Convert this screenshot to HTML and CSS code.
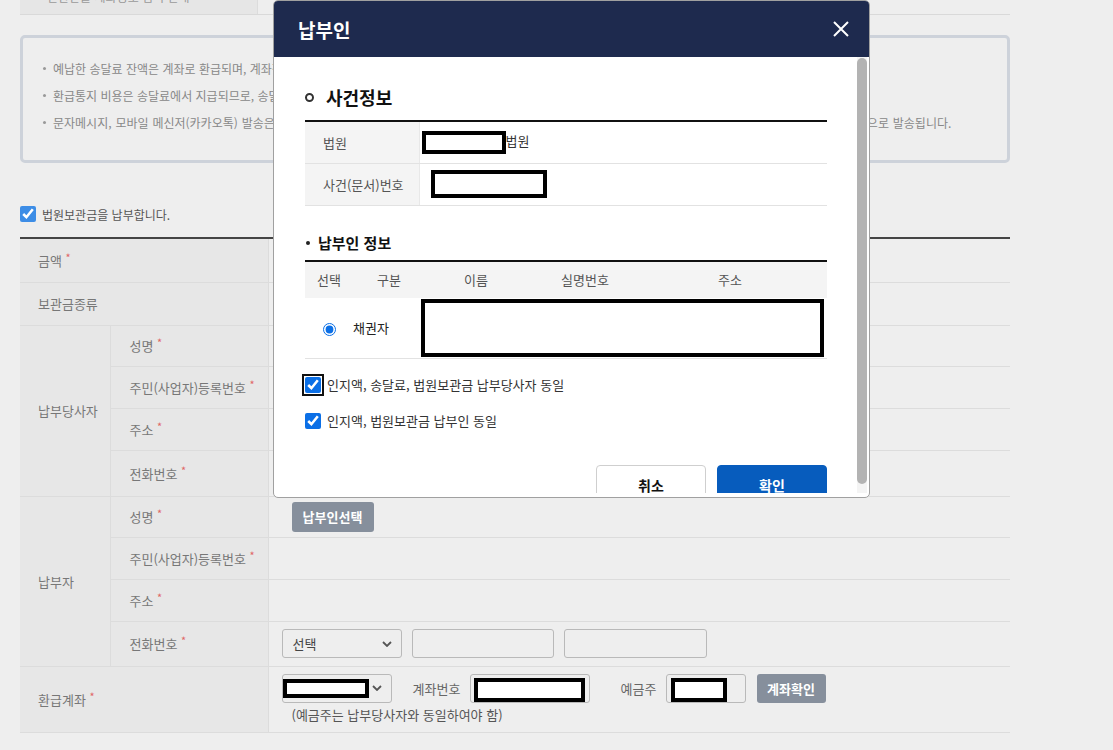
FILE: index.html
```html
<!DOCTYPE html>
<html lang="ko">
<head>
<meta charset="utf-8">
<title>법원보관금 납부</title>
<link rel="stylesheet" href="styles.css">
</head>
<body>
<div id="wrap">
	<div class="top-row">
		<div class="top-th"><span>반환받을 계좌정보 입력 안내</span></div>
		<div class="top-td"></div>
	</div>

	<!-- 안내문 -->
	<div class="notice">
		<ul>
			<li>예납한 송달료 잔액은 계좌로 환급되며, 계좌정보를 정확하게 입력하지 않으면 환급이 지연될 수 있습니다.</li>
			<li>환급통지 비용은 송달료에서 지급되므로, 송달료 잔액이 부족한 경우에는 환급통지가 발송되지 않을 수 있습니다.</li>
			<li class="wide">문자메시지, 모바일 메신저(카카오톡) 발송은 신청하신 경우에 한하여 본인이 직접 등록하신 휴대전화 번호로 문자메시지 또는 모바일 메신저(카카오톡) 알림톡 형식으로 발송됩니다.</li>
		</ul>
	</div>

	<label class="chk-line"><input type="checkbox" checked>법원보관금을 납부합니다.</label>

	<table class="form-table">
		<colgroup><col class="c1"><col class="c2"><col></colgroup>
		<tr class="h44"><th colspan="2">금액 <em>*</em></th><td></td></tr>
		<tr class="h43"><th colspan="2">보관금종류</th><td></td></tr>
		<tr class="h41"><th rowspan="4">납부당사자</th><th class="sub">성명 <em>*</em></th><td></td></tr>
		<tr><th class="sub">주민(사업자)등록번호 <em>*</em></th><td></td></tr>
		<tr><th class="sub">주소 <em>*</em></th><td></td></tr>
		<tr class="h46"><th class="sub">전화번호 <em>*</em></th><td></td></tr>
		<tr class="h41"><th rowspan="4">납부자</th><th class="sub">성명 <em>*</em></th><td><button class="btn-gray btn-pick">납부인선택</button></td></tr>
		<tr><th class="sub">주민(사업자)등록번호 <em>*</em></th><td></td></tr>
		<tr><th class="sub">주소 <em>*</em></th><td></td></tr>
		<tr class="h45"><th class="sub">전화번호 <em>*</em></th>
			<td>
				<div class="tel-line">
					<div class="sel sel-tel"><span>선택</span><svg width="10" height="6" viewBox="0 0 10 6"><path d="M1 1l4 4 4-4" fill="none" stroke="#555" stroke-width="1.8"/></svg></div>
					<div class="inp inp-tel"></div>
					<div class="inp inp-tel2"></div>
				</div>
			</td>
		</tr>
		<tr class="h66"><th colspan="2">환급계좌 <em>*</em></th>
			<td>
				<div class="acc-line">
					<div class="sel sel-bank"><span class="mask mask-bank"></span><svg width="10" height="6" viewBox="0 0 10 6"><path d="M1 1l4 4 4-4" fill="none" stroke="#555" stroke-width="1.8"/></svg></div>
					<span class="acc-lbl lbl-no">계좌번호</span>
					<div class="inp inp-acc"><span class="mask mask-acc"></span></div>
					<span class="acc-lbl lbl-owner">예금주</span>
					<div class="inp inp-owner"><span class="mask mask-owner"></span></div>
					<button class="btn-gray btn-acc">계좌확인</button>
				</div>
				<p class="acc-note">(예금주는 납부당사자와 동일하여야 함)</p>
			</td>
		</tr>
	</table>
</div>

<!-- 납부인 팝업 -->
<div class="modal">
	<div class="modal-head">
		<h2>납부인</h2>
		<a class="btn-close" href="#"><svg width="16" height="16" viewBox="0 0 16 16"><path d="M1 1L15 15M15 1L1 15" stroke="#fff" stroke-width="2"/></svg></a>
	</div>
	<div class="modal-body">
		<h3 class="tit-circle">사건정보</h3>
		<table class="info-table">
			<tr><th>법원</th><td><span class="mask mask-court"></span>법원</td></tr>
			<tr><th>사건(문서)번호</th><td><span class="mask mask-case"></span></td></tr>
		</table>

		<h4 class="tit-dot">납부인 정보</h4>
		<div class="payer-list">
			<div class="payer-head"><span>선택</span><span>구분</span><span>이름</span><span>실명번호</span><span>주소</span></div>
			<div class="payer-row">
				<span class="cell-radio"><input type="radio" name="payer" checked></span>
				<span class="cell-type">채권자</span>
				<span class="mask mask-payer"></span>
			</div>
		</div>

		<label class="agree is-focus"><input type="checkbox" checked>인지액, 송달료, 법원보관금 납부당사자 동일</label>
		<label class="agree"><input type="checkbox" checked>인지액, 법원보관금 납부인 동일</label>

		<div class="btn-area">
			<button class="btn-cancel">취소</button>
			<button class="btn-ok">확인</button>
		</div>
	</div>
	<div class="scroll-bar"><div class="scroll-thumb"></div></div>
</div>
</body>
</html>
```

FILE: styles.css
```css
*,*:before,*:after{box-sizing:border-box;}
body{margin:0;background:#eeeeee;font-family:"Noto Sans CJK KR","Noto Sans",sans-serif;font-size:13px;color:#555;}
button{font-family:inherit;cursor:pointer;}

#wrap{width:990px;margin-left:20px;}

/* 상단 잘린 행 */
.top-row{display:flex;height:15px;border-bottom:1px solid #d9d9d9;}
.top-th{width:238px;background:#e6e6e6;border-right:1px solid #dcdcdc;overflow:hidden;display:flex;align-items:flex-end;padding-left:27px;}
.top-th span{font-size:12px;line-height:14px;margin-bottom:10px;color:#999;white-space:nowrap;}
.top-td{flex:1;}

/* 안내 박스 */
.notice{margin-top:20px;height:128px;border:3px solid #cdd2da;border-radius:5px;padding:17px 0 0 19px;overflow:hidden;}
.notice ul{margin:0;padding:0;list-style:none;}
.notice li{position:relative;padding-left:11px;line-height:27px;font-size:12px;color:#888;white-space:nowrap;}
.notice li.wide{word-spacing:0.5px;}
.notice li:before{content:"";position:absolute;left:1px;top:12px;width:3px;height:3px;border-radius:50%;background:#999;}

.chk-line{display:flex;align-items:center;margin-top:43px;height:16px;font-size:12px;color:#555;}
.chk-line input{width:16px;height:16px;margin:0 6px 0 0;accent-color:#3d8de6;}

/* 입력 테이블 */
.form-table{width:100%;border-collapse:collapse;border-top:2px solid #444;margin-top:15px;}
.form-table col.c1{width:90px;}
.form-table col.c2{width:158px;}
.form-table tr{height:42px;}
.form-table tr.h41{height:41px;}
.form-table tr.h43{height:43px;}
.form-table tr.h44{height:44px;}
.form-table tr.h45{height:45px;}
.form-table tr.h46{height:46px;}
.form-table tr.h66{height:66px;}
.form-table th{background:#e7e7e7;font-weight:normal;text-align:left;color:#777;padding:0 0 0 18px;border-bottom:1px solid #dcdcdc;border-right:1px solid #dcdcdc;white-space:nowrap;}
.form-table th.sub{padding-left:19px;}
.form-table td{border-bottom:1px solid #dcdcdc;padding:0 0 0 13px;}
.form-table em{font-style:normal;color:#e06666;font-size:11px;vertical-align:top;position:relative;top:-2px;}

.btn-gray{border:0;border-radius:3px;background:#868f9c;color:#fff;font-weight:bold;font-size:13px;height:30px;padding:0;}
.btn-pick{width:82px;margin-left:10px;}
.btn-acc{width:69px;margin-left:11px;height:29px;}

.sel,.inp{height:29px;border:1px solid #b9b9b9;border-radius:3px;}
.sel{display:flex;align-items:center;justify-content:space-between;padding:0 9px 0 10px;color:#444;}
.tel-line,.acc-line{display:flex;align-items:center;}
.sel-tel{width:120px;}
.inp-tel{width:142px;margin-left:10px;}
.inp-tel2{width:143px;margin-left:10px;}

.sel-bank{width:110px;padding-left:0;}
.acc-lbl{color:#666;}
.lbl-no{width:57px;margin-left:21px;}
.lbl-owner{width:45px;margin-left:31px;}
.inp{display:flex;align-items:flex-end;}
.inp-acc{width:120px;padding:0 4px 0 3px;}
.inp-owner{width:80px;padding:0 0 0 4px;}
.acc-note{margin:2px 0 0 10px;line-height:20px;color:#555;}

/* 가림 처리 */
.mask{display:inline-block;border:4px solid #000;background:#fff;vertical-align:middle;}
.mask-bank{width:86px;height:19px;}
.mask-acc{width:111px;height:24px;}
.mask-owner{width:56px;height:24px;}

/* 팝업 */
.modal{position:absolute;left:273px;top:0;width:597px;height:498px;background:#fff;border:1px solid #a0a0a0;border-radius:5px;padding-bottom:4px;overflow:hidden;}
.modal-head{height:56px;background:#1e2a4e;display:flex;align-items:center;justify-content:space-between;padding:0 20px 0 24px;}
.modal-head h2{margin:0;color:#fff;font-size:19px;font-weight:bold;}
.btn-close{display:block;width:16px;height:16px;}
.btn-close svg{display:block;}

.modal-body{height:436px;overflow:hidden;padding:28px 42px 0 31px;color:#333;}
.scroll-bar{position:absolute;right:2px;top:56px;width:10px;height:436px;background:#f4f4f4;}
.scroll-thumb{height:426px;margin-top:1px;background:#b3b3b3;border-radius:5px;}

.tit-circle{margin:0 0 11px;font-size:18px;line-height:24px;color:#111;display:flex;align-items:center;}
.tit-circle:before{content:"";width:9px;height:9px;border:2px solid #333;border-radius:50%;margin-right:12px;}

.info-table{width:100%;border-collapse:collapse;border-top:2px solid #111;}
.info-table th{width:114px;height:42px;background:#f4f4f4;font-weight:normal;text-align:left;padding:0 0 0 18px;color:#555;border-bottom:1px solid #e2e2e2;border-right:1px solid #e8e8e8;}
.info-table td{border-bottom:1px solid #e2e2e2;padding:0 0 0 2px;}
.mask-court{width:84px;height:23px;}
.mask-case{width:116px;height:28px;margin-left:9px;}

.tit-dot{margin:27px 0 7px;font-size:15px;line-height:20px;color:#111;display:flex;align-items:center;}
.tit-dot:before{content:"";width:4px;height:4px;background:#222;border-radius:50%;margin:0 8px 0 1px;}

.payer-list{border-top:2px solid #111;border-bottom:1px solid #e2e2e2;}
.payer-head{display:grid;grid-template-columns:48px 72px 102px 116px 1fr;padding-right:10px;height:36px;align-items:center;background:#f4f4f4;color:#555;text-align:center;}
.payer-row{display:flex;align-items:center;height:60px;}
.cell-radio{width:48px;text-align:center;}
.cell-radio input{margin:0;width:13px;height:13px;vertical-align:middle;accent-color:#0b6fe6;}
.cell-type{width:68px;padding-left:0;color:#222;}
.mask-payer{width:403px;height:58px;margin-left:0;}

.agree{display:flex;align-items:center;height:20px;margin-top:16px;color:#333;}
.agree input{width:16px;height:16px;margin:0 6px 0 0;accent-color:#0b6fe6;}
.agree.is-focus input{outline:2px solid #111;outline-offset:1px;border-radius:3px;}

.btn-area{display:flex;justify-content:flex-end;gap:11px;margin-top:34px;}
.btn-area button{width:110px;height:40px;border-radius:4px;font-size:14px;font-weight:bold;}
.btn-cancel{background:#fff;border:1px solid #cfcfcf;color:#111;}
.btn-ok{background:#075cbd;border:1px solid #075cbd;color:#fff;}
```
